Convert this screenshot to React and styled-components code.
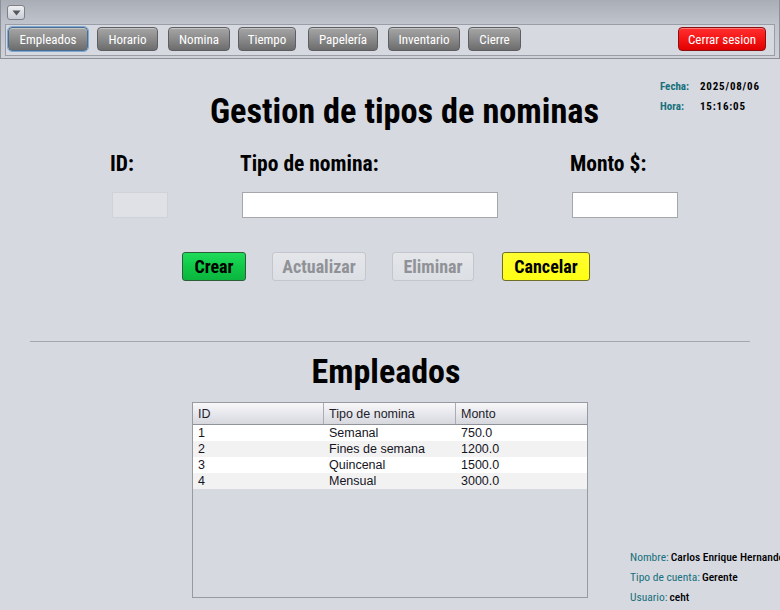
import React from "react";
import styled, { createGlobalStyle, css } from "styled-components";

const narrow = `"Roboto Condensed", "DejaVu Sans Condensed", sans-serif`;

const Global = createGlobalStyle`
  html, body { margin: 0; padding: 0; }
  body {
    background: #d6d9e0;
    font-family: ${narrow};
    width: 780px;
    height: 610px;
    overflow: hidden;
  }
`;

const Page = styled.div`
  width: 780px;
  height: 610px;
  display: flex;
  flex-direction: column;
  overflow: hidden;
`;

const TopBar = styled.div`
  height: 59px;
  box-sizing: border-box;
  background: linear-gradient(#a9adb6, #bfc3cb 40%, #cfd2d9);
  border: 1px solid #8d9099;
  border-top: none;
  padding: 5px 4px 0 4px;
  display: flex;
  flex-direction: column;
`;

const MenuToggle = styled.button`
  width: 18px;
  height: 15px;
  margin-left: 2px;
  padding: 0;
  border: 1px solid #7d8089;
  border-radius: 3px;
  background: linear-gradient(#eef0f3, #c9ccd3);
  display: flex;
  align-items: center;
  justify-content: center;
`;

const NavBar = styled.div`
  margin-top: 4px;
  height: 32px;
  box-sizing: border-box;
  border: 1px solid #9a9da6;
  background: #d6d9e0;
  display: flex;
  align-items: flex-start;
  padding: 2px 2px 0 2px;
`;

const NavButton = styled.button`
  height: 24px;
  padding: 0;
  width: ${(p) => p.$w}px;
  margin-left: ${(p) => p.$ml || 0}px;
  border-radius: 4px;
  font-family: ${narrow};
  font-size: 13px;
  color: #ffffff;
  border: 1px solid #5c5e63;
  background: linear-gradient(#a6a6a6, #8a8a8a 50%, #6c6c6c);
  box-shadow: inset 0 1px 0 rgba(255, 255, 255, 0.35);
  ${(p) =>
    p.$selected &&
    css`
      outline: 1px solid #7ea9d4;
      border-color: #4c6d90;
    `}
  ${(p) =>
    p.$danger &&
    css`
      border-color: #8a1010;
      background: linear-gradient(#ff3030, #f51616 50%, #e20000);
    `}
`;

const Content = styled.div`
  flex: 1;
  display: flex;
  flex-direction: column;
`;

const HeaderRow = styled.div`
  display: flex;
  align-items: flex-start;
  height: 92px;
`;

const Title = styled.h1`
  margin: 32px 0 0 210px;
  width: 392px;
  font-family: ${narrow};
  font-weight: bold;
  font-size: 34.3px;
  line-height: 40px;
  color: #000;
  white-space: nowrap;
`;

const DateBlock = styled.div`
  margin: 21px 0 0 58px;
  display: grid;
  grid-template-columns: 40px auto;
  row-gap: 7px;
  font-family: ${narrow};
  font-size: 11px;
  line-height: 13px;
`;

const InfoLabel = styled.span`
  color: #17707c;
  font-weight: ${(p) => (p.$bold ? "bold" : "normal")};
`;

const DateValue = styled.span`
  color: #000;
  font-weight: bold;
  letter-spacing: 0.8px;
`;

const FormGrid = styled.div`
  display: grid;
  grid-template-columns: 130px 330px 1fr;
  padding-left: 110px;
  row-gap: 15px;
`;

const FieldLabel = styled.label`
  font-family: ${narrow};
  font-weight: bold;
  font-size: 21.5px;
  line-height: 26px;
  color: #000;
`;

const Input = styled.input`
  margin-left: 2px;
  width: ${(p) => p.$w}px;
  height: 26px;
  box-sizing: border-box;
  border: 1px solid ${(p) => (p.disabled ? "#cfd2d8" : "#a5a7ad")};
  background: ${(p) => (p.disabled ? "#dfe1e6" : "#ffffff")};
  padding: 0 4px;
  font-size: 13px;
`;

const ActionRow = styled.div`
  display: flex;
  margin: 34px 0 0 182px;
`;

const variants = {
  green: css`
    background: linear-gradient(#20dc5a, #10c848 50%, #0cb53e);
    border-color: #2d5e3a;
    color: #000;
  `,
  yellow: css`
    background: linear-gradient(#ffff30, #ffff14);
    border-color: #6e6e2a;
    color: #000;
  `,
  disabled: css`
    background: linear-gradient(#e4e6ea, #dcdfe4);
    border-color: #c3c6cc;
    color: #909297;
  `,
};

const ActionButton = styled.button`
  width: ${(p) => p.$w}px;
  height: 29px;
  margin-left: ${(p) => p.$ml || 0}px;
  padding: 0;
  border: 1px solid;
  border-radius: 3px;
  font-family: ${narrow};
  font-weight: bold;
  font-size: 18px;
  ${(p) => variants[p.$variant]}
`;

const Divider = styled.hr`
  margin: 60px 30px 0 30px;
  border: none;
  border-top: 1px solid #a4a7ae;
  height: 0;
`;

const SectionTitle = styled.h2`
  margin: 9px 0 0 0;
  padding-right: 8px;
  text-align: center;
  font-family: ${narrow};
  font-weight: bold;
  font-size: 34px;
  line-height: 40px;
  color: #000;
`;

const BottomRow = styled.div`
  display: flex;
  align-items: flex-end;
  margin-top: 11px;
`;

const TableBox = styled.div`
  margin-left: 192px;
  width: 396px;
  height: 196px;
  box-sizing: border-box;
  border: 1px solid #979aa1;
  background: #d6d9e0;
  flex-shrink: 0;
  font-family: "Liberation Sans", Arial, sans-serif;
  font-size: 12.5px;
`;

const GridRow = styled.div`
  display: grid;
  grid-template-columns: 130px 132px 1fr;
`;

const HeaderRowT = styled(GridRow)`
  height: 22px;
  box-sizing: border-box;
  align-items: center;
  background: linear-gradient(#f8f8fa, #e4e5ea 60%, #d6d8de);
  border-bottom: 1px solid #8f9299;
  color: #1d1d2b;
`;

const HeadCell = styled.div`
  height: 100%;
  display: flex;
  align-items: center;
  padding-left: 5px;
  border-left: 1px solid #a9acb3;
  &:first-child { border-left: none; }
`;

const BodyRow = styled(GridRow)`
  height: 16px;
  line-height: 16px;
  background: ${(p) => (p.$alt ? "#f2f2f2" : "#ffffff")};
  color: #15151f;
`;

const Cell = styled.div`
  padding-left: 5px;
  border-left: 1px solid transparent;
  &:first-child { border-left: none; }
  white-space: nowrap;
`;

const UserInfo = styled.div`
  margin-left: 42px;
  margin-bottom: -6px;
  display: flex;
  flex-direction: column;
  gap: 7px;
  font-family: ${narrow};
  font-size: 11.5px;
  line-height: 13px;
  white-space: nowrap;
`;

const UserLine = styled.div``;

const UserValue = styled.span`
  color: #000;
  font-size: 11.5px;
  font-weight: 500;
  margin-left: 2px;
`;

const rows = [
  ["1", "Semanal", "750.0"],
  ["2", "Fines de semana", "1200.0"],
  ["3", "Quincenal", "1500.0"],
  ["4", "Mensual", "3000.0"],
];

export default function App() {
  return (
    <Page>
      <Global />
      <TopBar>
        <MenuToggle>
          <svg width="9" height="6" viewBox="0 0 9 6">
            <path d="M0.5 0.5 L8.5 0.5 L4.5 5.5 Z" fill="#555860" />
          </svg>
        </MenuToggle>
        <NavBar>
          <NavButton $selected $w={80}>Empleados</NavButton>
          <NavButton $w={61} $ml={9}>Horario</NavButton>
          <NavButton $w={62} $ml={10}>Nomina</NavButton>
          <NavButton $w={58} $ml={8}>Tiempo</NavButton>
          <NavButton $w={70} $ml={12}>Papelería</NavButton>
          <NavButton $w={72} $ml={10}>Inventario</NavButton>
          <NavButton $w={53} $ml={8}>Cierre</NavButton>
          <NavButton $danger $w={88} $ml={157}>Cerrar sesion</NavButton>
        </NavBar>
      </TopBar>
      <Content>
        <HeaderRow>
          <Title>Gestion de tipos de nominas</Title>
          <DateBlock>
            <InfoLabel $bold>Fecha:</InfoLabel>
            <DateValue>2025/08/06</DateValue>
            <InfoLabel $bold>Hora:</InfoLabel>
            <DateValue>15:16:05</DateValue>
          </DateBlock>
        </HeaderRow>
        <FormGrid>
          <FieldLabel>ID:</FieldLabel>
          <FieldLabel>Tipo de nomina:</FieldLabel>
          <FieldLabel>Monto $:</FieldLabel>
          <Input $w={56} disabled />
          <Input $w={256} />
          <Input $w={106} />
        </FormGrid>
        <ActionRow>
          <ActionButton $variant="green" $w={64}>Crear</ActionButton>
          <ActionButton $variant="disabled" $w={94} $ml={26} disabled>Actualizar</ActionButton>
          <ActionButton $variant="disabled" $w={82} $ml={26} disabled>Eliminar</ActionButton>
          <ActionButton $variant="yellow" $w={88} $ml={28}>Cancelar</ActionButton>
        </ActionRow>
        <Divider />
        <SectionTitle>Empleados</SectionTitle>
        <BottomRow>
          <TableBox>
            <HeaderRowT>
              <HeadCell>ID</HeadCell>
              <HeadCell>Tipo de nomina</HeadCell>
              <HeadCell>Monto</HeadCell>
            </HeaderRowT>
            {rows.map((r, i) => (
              <BodyRow key={r[0]} $alt={i % 2 === 1}>
                <Cell>{r[0]}</Cell>
                <Cell>{r[1]}</Cell>
                <Cell>{r[2]}</Cell>
              </BodyRow>
            ))}
          </TableBox>
          <UserInfo>
            <UserLine>
              <InfoLabel>Nombre:</InfoLabel>
              <UserValue>Carlos Enrique Hernandez</UserValue>
            </UserLine>
            <UserLine>
              <InfoLabel>Tipo de cuenta:</InfoLabel>
              <UserValue>Gerente</UserValue>
            </UserLine>
            <UserLine>
              <InfoLabel>Usuario:</InfoLabel>
              <UserValue>ceht</UserValue>
            </UserLine>
          </UserInfo>
        </BottomRow>
      </Content>
    </Page>
  );
}
